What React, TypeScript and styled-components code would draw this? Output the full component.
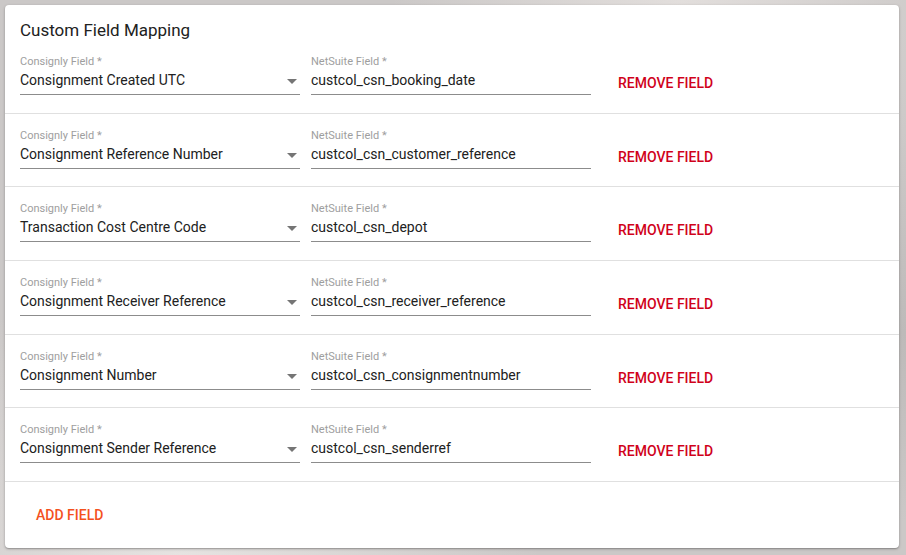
import React from "react";
import styled, { createGlobalStyle } from "styled-components";

const GlobalStyle = createGlobalStyle`
  html, body {
    margin: 0;
    padding: 0;
    height: 100%;
  }
  body {
    font-family: Roboto, "Liberation Sans", Arial, sans-serif;
    background-color: #cbc8c7;
    background-image:
      radial-gradient(ellipse at 20% 100%, #e6e3e1 0%, rgba(230, 227, 225, 0) 35%),
      radial-gradient(ellipse at 75% 0%, #e2dedc 0%, rgba(226, 222, 220, 0) 30%),
      radial-gradient(ellipse at 100% 60%, #bdbab9 0%, rgba(189, 186, 185, 0) 40%);
  }
`;

const Page = styled.div`
  padding: 5px 7px 7px 5px;
  width: 906px;
  height: 555px;
  box-sizing: border-box;
`;

const Card = styled.div`
  background: #fff;
  border-radius: 4px;
  box-shadow: 0 1px 3px rgba(0, 0, 0, 0.25), 0 1px 1px rgba(0, 0, 0, 0.14);
  display: flex;
  flex-direction: column;
  height: 543px;
  box-sizing: border-box;
`;

const Title = styled.h2`
  margin: 0;
  padding: 15px 15px 0 15px;
  height: 35px;
  box-sizing: border-box;
  font-size: 17px;
  font-weight: 400;
  color: #212121;
  line-height: 20px;
`;

const Row = styled.div`
  display: flex;
  align-items: flex-start;
  gap: 11px;
  padding: 15px 15px 0 15px;
  height: 73.7px;
  box-sizing: border-box;
  border-bottom: 1px solid #e0e0e0;
`;

const Field = styled.div`
  width: 280px;
  display: flex;
  flex-direction: column;
`;

const Label = styled.label`
  font-size: 11px;
  line-height: 14px;
  color: #9e9e9e;
  height: 14px;
`;

const InputBox = styled.div`
  position: relative;
  height: 26px;
  display: flex;
  align-items: center;
  border-bottom: 1px solid #8c8c8c;
  box-sizing: border-box;
  padding-bottom: 3px;
`;

const Value = styled.span`
  font-size: 14px;
  color: #212121;
  white-space: nowrap;
`;

const Arrow = styled.span`
  position: absolute;
  right: 3px;
  top: 10px;
  width: 0;
  height: 0;
  border-left: 5px solid transparent;
  border-right: 5px solid transparent;
  border-top: 5px solid #757575;
`;

const TextButton = styled.button<{ $color: string }>`
  background: none;
  border: none;
  padding: 0 16px;
  height: 36px;
  font-family: Roboto, "Liberation Sans", Arial, sans-serif;
  font-size: 14px;
  font-weight: 500;
  text-transform: uppercase;
  color: ${({ $color }) => $color};
  cursor: pointer;
  border-radius: 2px;
`;

const RemoveButton = styled(TextButton)`
  margin-top: 10px;
`;

const Footer = styled.div`
  padding: 15px 15px;
  display: flex;
  align-items: center;
`;

const mappings = [
  ["Consignment Created UTC", "custcol_csn_booking_date"],
  ["Consignment Reference Number", "custcol_csn_customer_reference"],
  ["Transaction Cost Centre Code", "custcol_csn_depot"],
  ["Consignment Receiver Reference", "custcol_csn_receiver_reference"],
  ["Consignment Number", "custcol_csn_consignmentnumber"],
  ["Consignment Sender Reference", "custcol_csn_senderref"],
];

export default function App() {
  return (
    <>
      <GlobalStyle />
      <Page>
        <Card>
          <Title>Custom Field Mapping</Title>
          {mappings.map(([consignly, netsuite]) => (
            <Row key={netsuite}>
              <Field>
                <Label>Consignly Field *</Label>
                <InputBox>
                  <Value>{consignly}</Value>
                  <Arrow />
                </InputBox>
              </Field>
              <Field>
                <Label>NetSuite Field *</Label>
                <InputBox>
                  <Value>{netsuite}</Value>
                </InputBox>
              </Field>
              <RemoveButton $color="#d0021b">Remove Field</RemoveButton>
            </Row>
          ))}
          <Footer>
            <TextButton $color="#f4511e">Add Field</TextButton>
          </Footer>
        </Card>
      </Page>
    </>
  );
}
